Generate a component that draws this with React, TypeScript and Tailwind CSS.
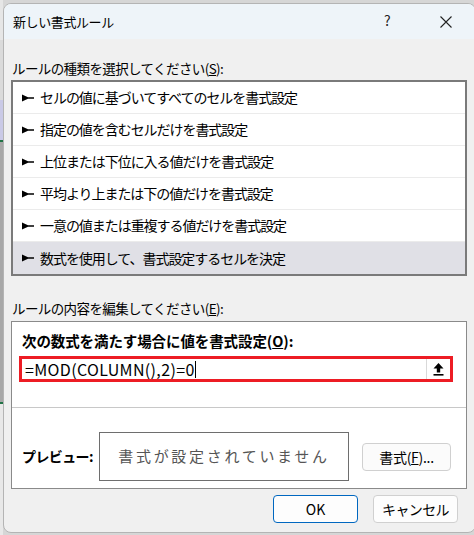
import React from "react";

const Arrow = () => (
  <svg width="12" height="8" viewBox="0 0 12 8" className="shrink-0">
    <polygon points="0,0.5 6,3.3 12,3.3 12,4.7 6,4.7 0,7.5" fill="#000" />
  </svg>
);

const items = [
  "セルの値に基づいてすべてのセルを書式設定",
  "指定の値を含むセルだけを書式設定",
  "上位または下位に入る値だけを書式設定",
  "平均より上または下の値だけを書式設定",
  "一意の値または重複する値だけを書式設定",
  "数式を使用して、書式設定するセルを決定",
];

export default function App() {
  return (
    <div className="w-[474px] h-[535px] overflow-hidden bg-[#d6d6d6] flex font-['Noto_Sans_CJK_JP',sans-serif] text-black">
      {/* Excel background strip */}
      <div className="w-[3px] shrink-0 flex flex-col">
        <div className="h-[40px] bg-[#e6e6e6]" />
        <div className="h-[60px] bg-[#dadada]" />
        <div className="h-[40px] bg-[#c9c9e6]" />
        <div className="h-[2px] bg-[#217346]" />
        <div className="h-[260px] bg-[#a8a8a8]" />
        <div className="h-[2px] bg-[#217346]" />
        <div className="flex-1 bg-[#e8e8e8]" />
      </div>
      <div className="pt-[3px] flex-1">
        <div className="w-[473px] h-[530px] rounded-[8px] border border-[#b4b4b4] bg-[#f0f0f0] overflow-hidden flex flex-col">
          {/* title bar */}
          <div className="h-[35px] shrink-0 bg-[#eef4f9] flex items-center pl-[9px] relative">
            <span className="text-[13px] tracking-[-0.4px] leading-none">新しい書式ルール</span>
            <span className="absolute left-[380px] top-[9px] text-[14px] leading-none text-[#222]">?</span>
            <svg className="absolute left-[436px] top-[12px]" width="12" height="12" viewBox="0 0 12 12">
              <path d="M0.5 0.5 L11.5 11.5 M11.5 0.5 L0.5 11.5" stroke="#222" strokeWidth="1.1" />
            </svg>
          </div>
          {/* body */}
          <div className="pl-[7px] flex flex-col">
            <div className="mt-[20px] h-[18px] pl-[1px] text-[13.5px] leading-[18px] tracking-[-0.6px]">
              ルールの種類を選択してください(<span className="underline">S</span>):
            </div>
            <div className="mt-[3px] w-[456px] h-[196px] border-2 border-[#7a7a7a] bg-white flex flex-col">
              {items.map((t, i) => (
                <div
                  key={i}
                  className={
                    "h-[32px] flex items-center pl-[9px] gap-[6px] text-[14px] tracking-[-1.05px] " +
                    (i < 5 ? "border-b border-[#ebebeb] " : "") +
                    (i === 5 ? "bg-[#e0e0e6]" : "")
                  }
                >
                  <Arrow />
                  <span>{t}</span>
                </div>
              ))}
            </div>
            <div className="mt-[23px] h-[18px] pl-[1px] text-[13.5px] leading-[18px] tracking-[-0.6px]">
              ルールの内容を編集してください(<span className="underline">E</span>):
            </div>
            <div className="mt-[4px] w-[456px] h-[168px] border border-[#8a8a8a] bg-white flex flex-col">
              <div className="pt-[10px] pl-[10px] h-[28px] text-[14.5px] leading-[18px] font-bold tracking-[-0.1px]">
                次の数式を満たす場合に値を書式設定(<span className="underline">O</span>):
              </div>
              <div className="mt-[6px] ml-[7px] w-[434px] h-[26px] border-[3px] border-[#ed1c24] flex items-center">
                <div className="flex-1 flex items-center pl-[3px] text-[16px] tracking-[0.35px] leading-none">
                  <span>=MOD(COLUMN(),2)=0</span>
                  <span className="w-px h-[17px] bg-black" />
                </div>
                <div className="w-[24px] h-full border-l border-[#d9d9d9] flex items-center justify-center">
                  <svg width="11" height="13" viewBox="0 0 11 13">
                    <path d="M5.5 0 L10.5 5.5 L7.2 5.5 L7.2 9.5 L3.8 9.5 L3.8 5.5 L0.5 5.5 Z" fill="#000" />
                    <rect x="0.5" y="11" width="10" height="1.6" fill="#000" />
                  </svg>
                </div>
              </div>
              <div className="mt-[25px] h-px bg-[#c8c8c8]" />
              <div className="mt-[24px] flex items-start pl-[10px]">
                <div className="w-[77px] h-[49px] flex items-center text-[14px] font-bold tracking-[-0.6px]">
                  プレビュー:
                </div>
                <div className="w-[250px] h-[49px] border border-[#6e6e6e] flex items-center justify-center text-[15px] text-[#555] tracking-[2.7px]">
                  書式が設定されていません
                </div>
                <div className="ml-[13px] mt-[11px] w-[89px] h-[28px] rounded-[4px] border border-[#d0d0d0] bg-[#fbfbfb] flex items-center justify-center text-[14px] tracking-[-0.3px]">
                  書式(<span className="underline">F</span>)...
                </div>
              </div>
            </div>
            <div className="mt-[6px] w-[447px] flex justify-end gap-[15px]">
              <div className="w-[85px] h-[28px] rounded-[4px] border border-[#0067c0] bg-[#fdfdfd] flex items-center justify-center text-[14px]">
                OK
              </div>
              <div className="w-[85px] h-[28px] rounded-[4px] border border-[#d0d0d0] bg-[#fdfdfd] flex items-center justify-center text-[14px] tracking-[-0.6px]">
                キャンセル
              </div>
            </div>
          </div>
        </div>
      </div>
    </div>
  );
}
